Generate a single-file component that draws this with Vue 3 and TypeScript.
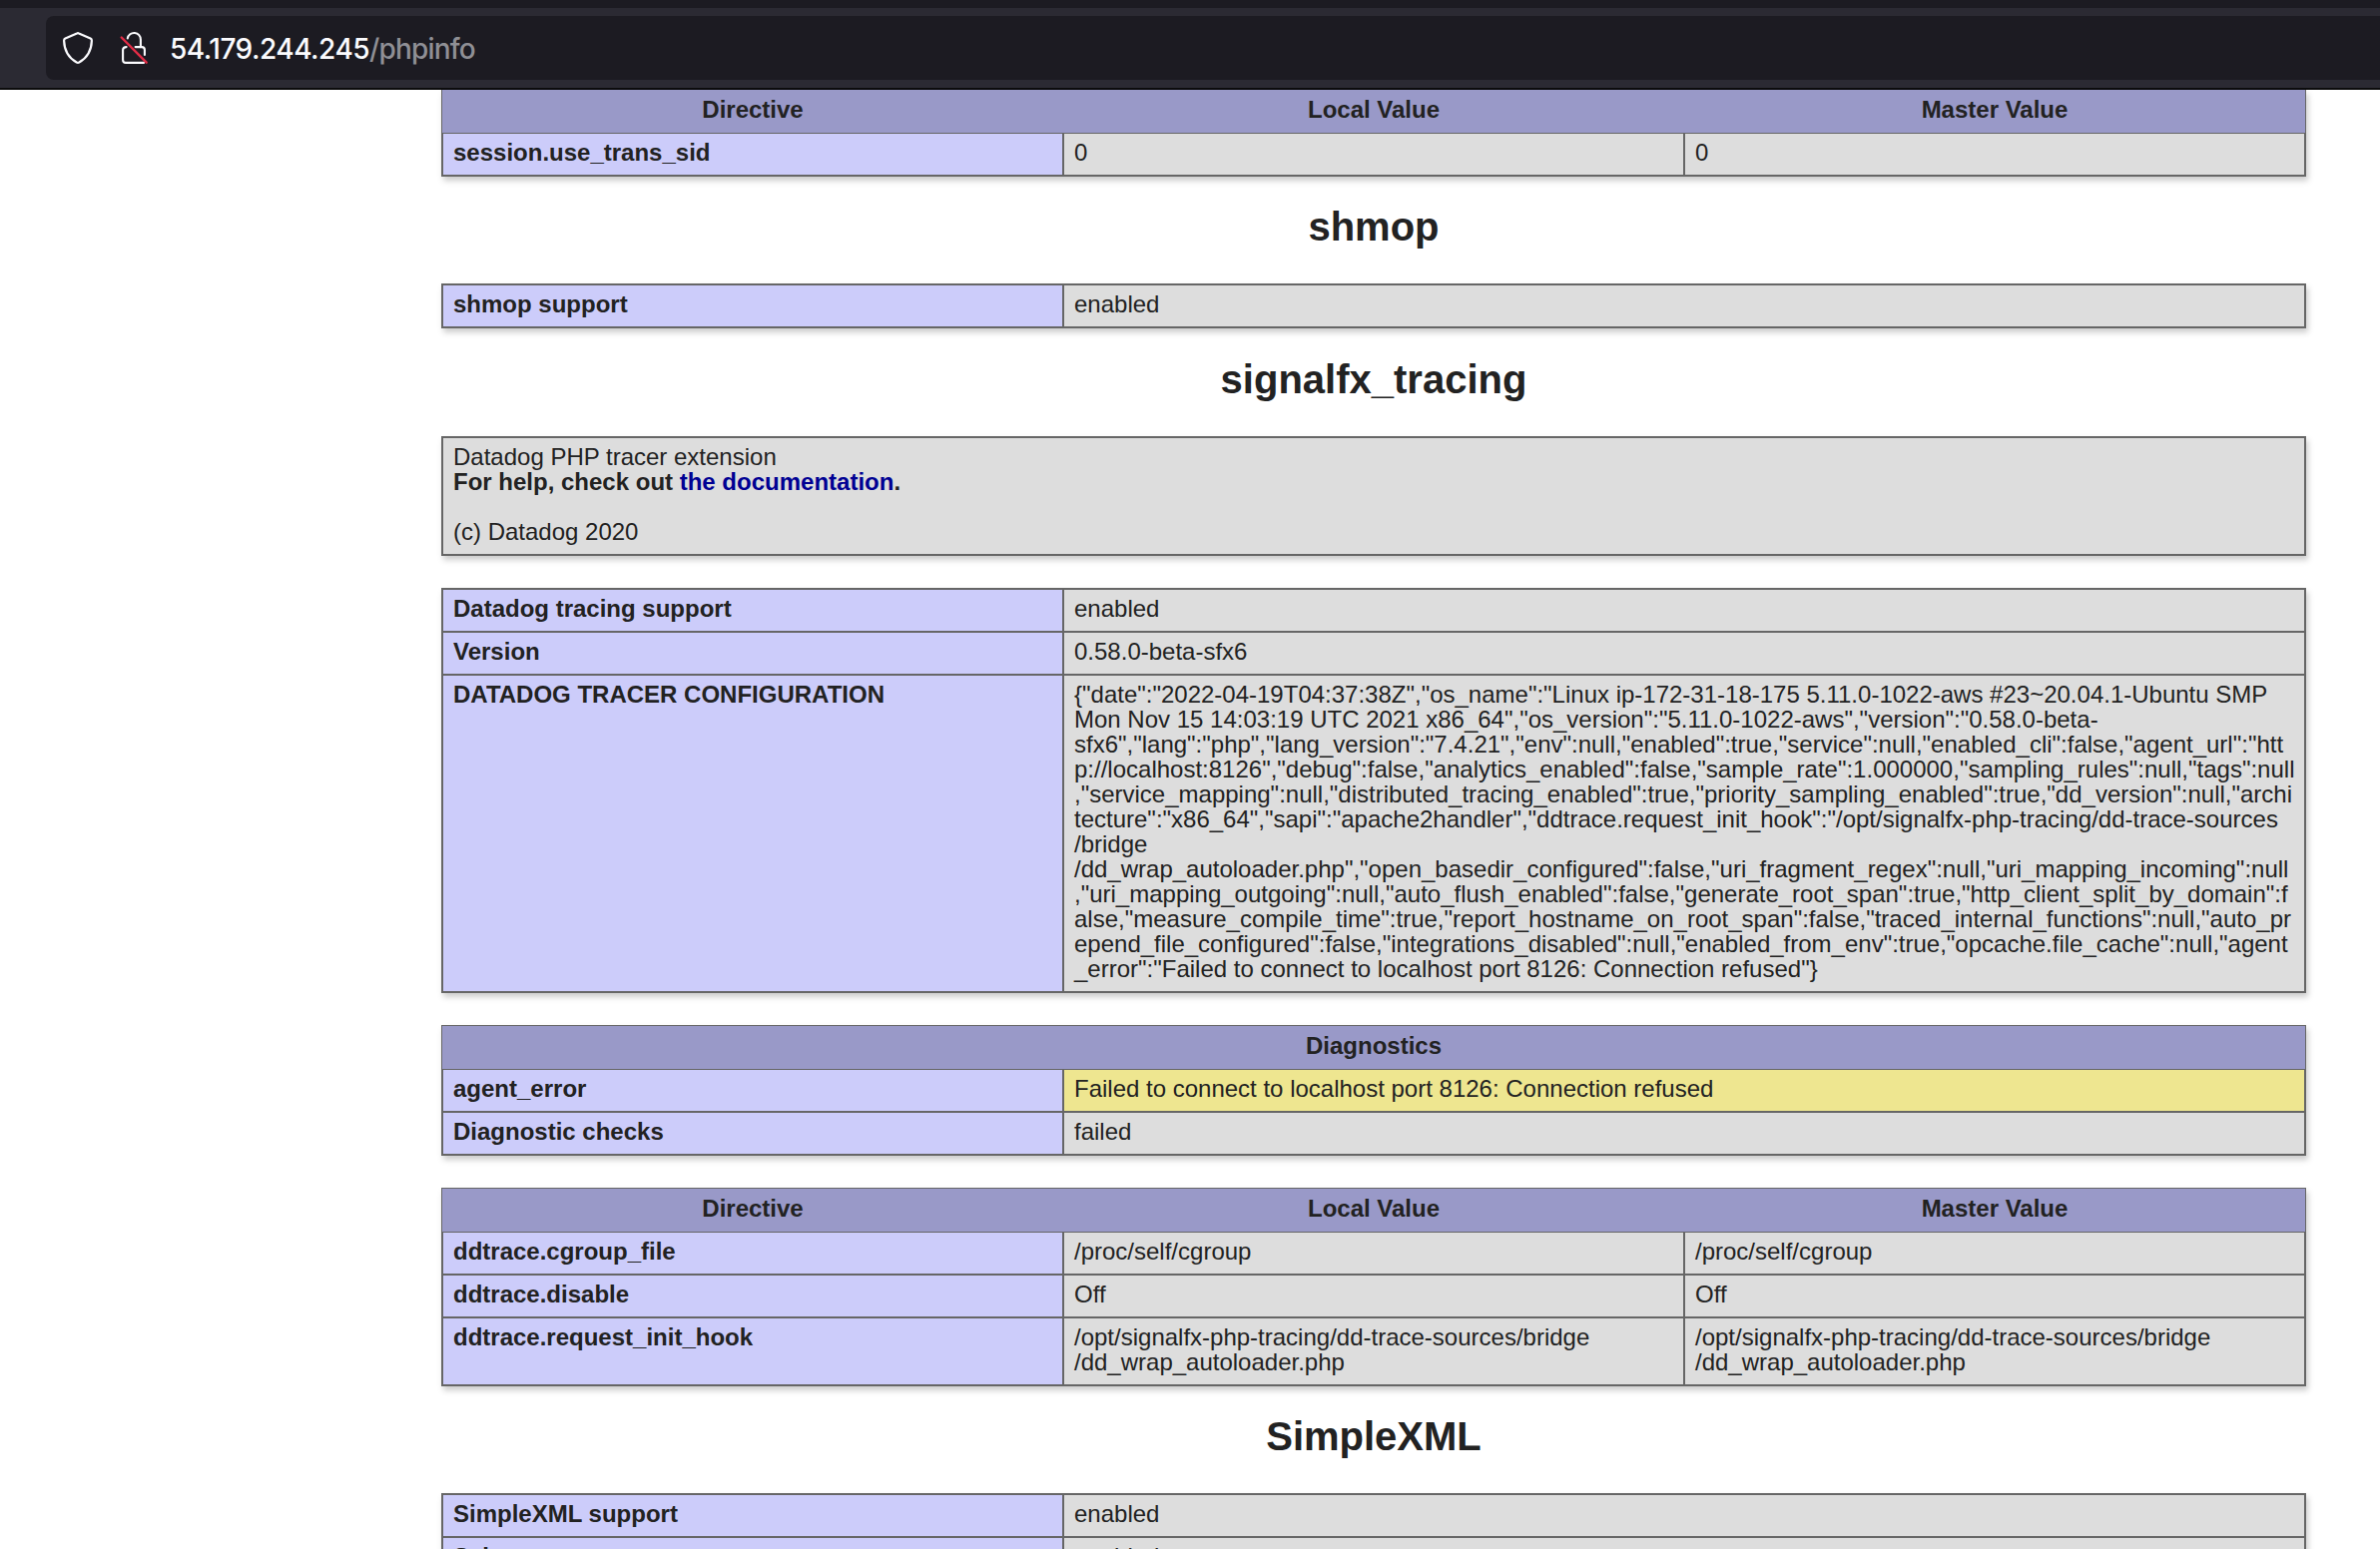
<script setup lang="ts">
interface Row {
  key: string
  values: string[]
  warn?: boolean
}

interface InfoTable {
  head?: string[]
  rows: Row[]
}

interface Section {
  title?: string
  intro?: boolean
  tables: InfoTable[]
}

const directiveHead = ['Directive', 'Local Value', 'Master Value']

const tracerConfig = [
  '{"date":"2022-04-19T04:37:38Z","os_name":"Linux ip-172-31-18-175 5.11.0-1022-aws #23~20.04.1-Ubuntu SMP',
  'Mon Nov 15 14:03:19 UTC 2021 x86_64","os_version":"5.11.0-1022-aws","version":"0.58.0-beta-',
  'sfx6","lang":"php","lang_version":"7.4.21","env":null,"enabled":true,"service":null,"enabled_cli":false,"agent_url":"htt',
  'p://localhost:8126","debug":false,"analytics_enabled":false,"sample_rate":1.000000,"sampling_rules":null,"tags":null',
  ',"service_mapping":null,"distributed_tracing_enabled":true,"priority_sampling_enabled":true,"dd_version":null,"archi',
  'tecture":"x86_64","sapi":"apache2handler","ddtrace.request_init_hook":"/opt/signalfx-php-tracing/dd-trace-sources',
  '/bridge',
  '/dd_wrap_autoloader.php","open_basedir_configured":false,"uri_fragment_regex":null,"uri_mapping_incoming":null',
  ',"uri_mapping_outgoing":null,"auto_flush_enabled":false,"generate_root_span":true,"http_client_split_by_domain":f',
  'alse,"measure_compile_time":true,"report_hostname_on_root_span":false,"traced_internal_functions":null,"auto_pr',
  'epend_file_configured":false,"integrations_disabled":null,"enabled_from_env":true,"opcache.file_cache":null,"agent',
  '_error":"Failed to connect to localhost port 8126: Connection refused"}',
].join('\n')

const initHook = '/opt/signalfx-php-tracing/dd-trace-sources/bridge\n/dd_wrap_autoloader.php'

const sections: Section[] = [
  { tables: [{ head: directiveHead, rows: [{ key: 'session.use_trans_sid', values: ['0', '0'] }] }] },
  { title: 'shmop', tables: [{ rows: [{ key: 'shmop support', values: ['enabled'] }] }] },
  {
    title: 'signalfx_tracing',
    intro: true,
    tables: [
      {
        rows: [
          { key: 'Datadog tracing support', values: ['enabled'] },
          { key: 'Version', values: ['0.58.0-beta-sfx6'] },
          { key: 'DATADOG TRACER CONFIGURATION', values: [tracerConfig] },
        ],
      },
      {
        head: ['Diagnostics'],
        rows: [
          { key: 'agent_error', values: ['Failed to connect to localhost port 8126: Connection refused'], warn: true },
          { key: 'Diagnostic checks', values: ['failed'] },
        ],
      },
      {
        head: directiveHead,
        rows: [
          { key: 'ddtrace.cgroup_file', values: ['/proc/self/cgroup', '/proc/self/cgroup'] },
          { key: 'ddtrace.disable', values: ['Off', 'Off'] },
          { key: 'ddtrace.request_init_hook', values: [initHook, initHook] },
        ],
      },
    ],
  },
  {
    title: 'SimpleXML',
    tables: [
      {
        rows: [
          { key: 'SimpleXML support', values: ['enabled'] },
          { key: 'Schema support', values: ['enabled'] },
        ],
      },
    ],
  },
]
</script>

<template>
  <div class="window">
    <header class="toolbar">
      <div class="urlbar">
        <svg class="shield" width="32" height="34" viewBox="0 0 32 34" fill="none">
          <path
            d="M15 2.4 Q16 1.9 17 2.4 L28.6 7.5 Q30 8.2 29.9 9.8 C29.6 19 26.2 26.6 17.2 31.5 Q16 32.1 14.8 31.5 C5.8 26.6 2.4 19 2.1 9.8 Q2 8.2 3.4 7.5 Z"
            stroke="#fbfbfe"
            stroke-width="2.2"
            stroke-linejoin="round"
          />
        </svg>
        <svg class="lock" width="32" height="34" viewBox="0 0 32 34" fill="none">
          <g stroke="#fbfbfe" stroke-width="2.1" stroke-linecap="round" stroke-linejoin="round">
            <path d="M9.8 7.4 A6.6 6.6 0 0 1 22.9 8.7 V16.1" />
            <path d="M17.6 16.1 H24 Q26.9 16.1 26.9 19 V24" />
            <path d="M8.6 16.1 Q5.1 16.1 5.1 19 V29 Q5.1 31.9 8 31.9 H26" />
          </g>
          <path d="M3.7 6.5 L28.7 31.7" stroke="#e22c46" stroke-width="2.4" stroke-linecap="round" />
        </svg>
        <div class="url"><span class="host">54.179.244.245</span><span class="path">/phpinfo</span></div>
      </div>
    </header>
    <main class="page">
      <section v-for="(section, s) in sections" :key="s" class="section" :class="{ described: section.intro }">
        <h2 v-if="section.title" class="title">{{ section.title }}</h2>
        <div v-if="section.intro" class="table">
          <div class="row first">
            <div class="cell value intro">Datadog PHP tracer extension<br /><strong>For help, check out <a class="link">the documentation</a>.</strong><br /><br />(c) Datadog 2020</div>
          </div>
        </div>
        <div v-for="(table, t) in section.tables" :key="t" class="table">
          <div v-if="table.head" class="head">
            <div v-for="label in table.head" :key="label" class="th">{{ label }}</div>
          </div>
          <div
            v-for="(row, r) in table.rows"
            :key="row.key"
            class="row"
            :class="{ first: !table.head && r === 0 }"
          >
            <div class="cell key">{{ row.key }}</div>
            <div v-for="(value, v) in row.values" :key="v" class="cell value" :class="{ warn: row.warn }">{{ value }}</div>
          </div>
        </div>
      </section>
    </main>
  </div>
</template>

<style>
body {
  margin: 0;
  background: #fff;
  overflow: hidden;
}
</style>

<style scoped>
.window {
  width: 2384px;
  height: 1552px;
  overflow: hidden;
  display: flex;
  flex-direction: column;
  background: #fff;
}
.toolbar {
  flex: none;
  box-sizing: border-box;
  height: 90px;
  padding: 8px 0 8px 46px;
  background: #2b2a33;
  border-top: 8px solid #1c1b22;
  border-bottom: 2px solid #0c0c0d;
}
.urlbar {
  display: flex;
  align-items: center;
  height: 64px;
  box-sizing: border-box;
  padding-left: 16px;
  border-radius: 8px 0 0 8px;
  background: #1c1b22;
}
.shield {
  flex: none;
}
.lock {
  flex: none;
  margin-left: 24px;
}
.url {
  margin-left: 20px;
  padding-top: 2px;
  font: 500 28px/40px Inter, sans-serif;
  white-space: pre;
}
.host {
  color: #fbfbfe;
  letter-spacing: -0.5px;
}
.path {
  color: #8f8f95;
  letter-spacing: -0.85px;
}
.page {
  flex: 1;
  min-height: 0;
  overflow: hidden;
  padding-left: 442px;
  font: 24px/25px "Liberation Sans", Arial, sans-serif;
  color: #222;
}
.section {
  width: 1868px;
}
.section.described {
  padding-top: 1px;
}
.title {
  margin: 0;
  height: 107px;
  padding-top: 29px;
  box-sizing: border-box;
  font-size: 40px;
  line-height: 42px;
  font-weight: bold;
  text-align: center;
}
.table {
  box-shadow: 2px 4px 6px #ccc;
}
.table + .table {
  margin-top: 32px;
}
.section:first-child .head {
  border-top: 0;
}
.head {
  display: flex;
  border: 1px solid #666;
  background: #9999c8;
}
.th {
  flex: 1;
  padding: 7px 10px 11px;
  text-align: center;
  font-weight: bold;
}
.row {
  display: flex;
  border: 2px solid #666;
  border-top: 0;
}
.row.first {
  border-top: 2px solid #666;
}
.cell {
  flex: 1;
  padding: 6px 10px 10px;
  white-space: pre;
  box-sizing: border-box;
}
.key {
  flex: 0 0 620px;
  background: #ccccfa;
  font-weight: bold;
}
.key ~ .value {
  border-left: 2px solid #666;
}
.value {
  background: #ddd;
}
.value.warn {
  background: #eee690;
}
.intro {
  white-space: normal;
}
.link {
  color: #000093;
}
</style>
